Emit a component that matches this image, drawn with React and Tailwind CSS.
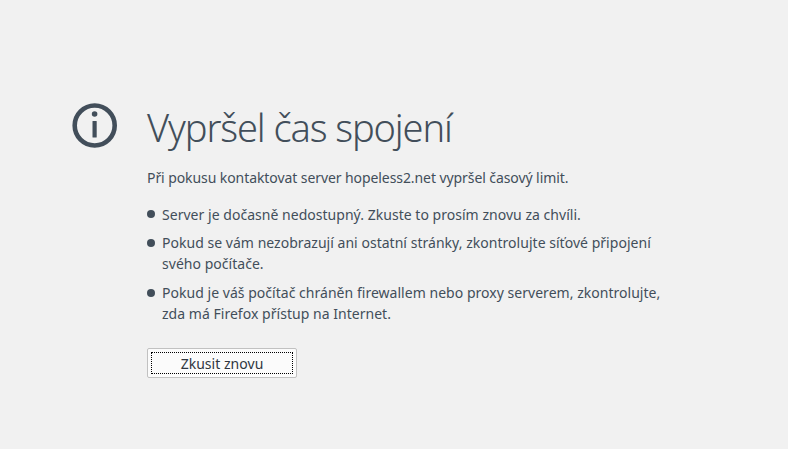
export default function App() {
  return (
    <div className="min-h-screen bg-[#f1f1f1] text-[#424e5a] font-['Noto_Sans',sans-serif] pt-[103px] pl-[72px]">
      <div className="flex">
        <svg width="46" height="46" viewBox="0 0 46 46" className="shrink-0 mr-[29px]">
          <circle cx="22.700" cy="22.500" r="20" fill="none" stroke="#424e5a" strokeWidth="4.600" />
          <circle cx="22.600" cy="11" r="2.800" fill="#424e5a" />
          <rect x="20.500" y="18" width="4.200" height="16.500" rx="0.500" fill="#424e5a" />
        </svg>
        <div className="w-[520px]">
          <h1 className="-mt-[1px] text-[38px] leading-[50px] font-light tracking-[-1.1px] whitespace-nowrap">Vypršel čas spojení</h1>
          <p className="mt-[15px] text-[14px] leading-[21px] tracking-[-0.08px] whitespace-nowrap">Při pokusu kontaktovat server hopeless2.net vypršel časový limit.</p>
          <ul className="mt-[16px] text-[14px] leading-[21px] tracking-[0.03px]">
            <li className="flex mb-[7px]">
              <span className="w-[8px] h-[8px] rounded-full bg-[#424e5a] mt-[6px] mr-[7px] shrink-0"></span>
              <span className="whitespace-nowrap">Server je dočasně nedostupný. Zkuste to prosím znovu za chvíli.</span>
            </li>
            <li className="flex mb-[8px]">
              <span className="w-[8px] h-[8px] rounded-full bg-[#424e5a] mt-[7px] mr-[7px] shrink-0"></span>
              <span className="whitespace-nowrap">Pokud se vám nezobrazují ani ostatní stránky, zkontrolujte síťové připojení<br />svého počítače.</span>
            </li>
            <li className="flex">
              <span className="w-[8px] h-[8px] rounded-full bg-[#424e5a] mt-[7px] mr-[7px] shrink-0"></span>
              <span className="whitespace-nowrap">Pokud je váš počítač chráněn firewallem nebo proxy serverem, zkontrolujte,<br />zda má Firefox přístup na Internet.</span>
            </li>
          </ul>
          <button className="mt-[24px] block w-[150px] h-[30px] p-[3px] bg-[#fbfbfb] border border-[#c1c1c1] rounded-[2px]">
            <span className="flex items-center justify-center h-full border border-dotted border-black text-[14px] tracking-[0.03px] text-[#2f3640]">Zkusit znovu</span>
          </button>
        </div>
      </div>
    </div>
  )
}
